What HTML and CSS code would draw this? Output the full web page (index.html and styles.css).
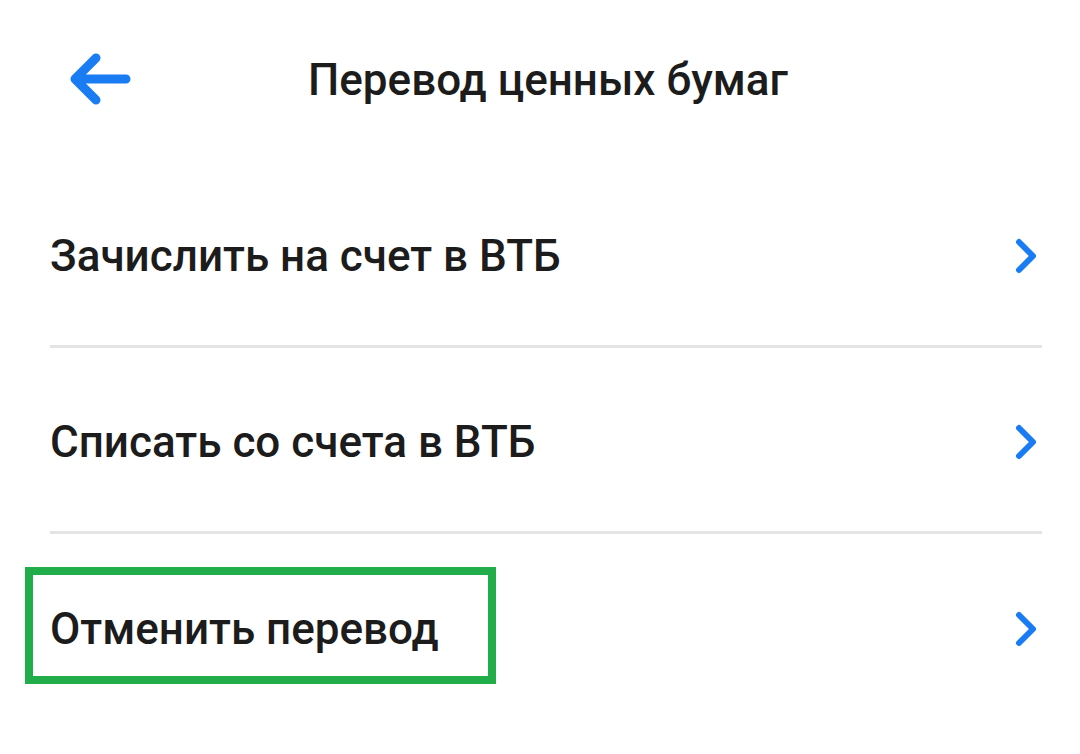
FILE: index.html
```html
<!DOCTYPE html>
<html lang="ru">
<head>
<meta charset="utf-8">
<link rel="stylesheet" href="styles.css">
</head>
<body>
<div class="screen">
  <header class="topbar">
    <button class="back" aria-label="Назад">
      <svg width="64" height="56" viewBox="0 0 64 56"><path d="M58 27H8M28 6L7 27l21 21" fill="none" stroke="#1A7CF2" stroke-width="9" stroke-linecap="round" stroke-linejoin="round"/></svg>
    </button>
    <h1 class="title">Перевод ценных бумаг</h1>
  </header>
  <ul class="list">
    <li class="item"><span class="label">Зачислить на счет в ВТБ</span><svg class="chev" width="24" height="36" viewBox="0 0 24 36"><path d="M5 4l14 14L5 32" fill="none" stroke="#1A7CF2" stroke-width="6" stroke-linecap="round" stroke-linejoin="round"/></svg></li>
    <li class="item"><span class="label">Списать со счета в ВТБ</span><svg class="chev" width="24" height="36" viewBox="0 0 24 36"><path d="M5 4l14 14L5 32" fill="none" stroke="#1A7CF2" stroke-width="6" stroke-linecap="round" stroke-linejoin="round"/></svg></li>
    <li class="item last"><span class="label hl">Отменить перевод</span><svg class="chev" width="24" height="36" viewBox="0 0 24 36"><path d="M5 4l14 14L5 32" fill="none" stroke="#1A7CF2" stroke-width="6" stroke-linecap="round" stroke-linejoin="round"/></svg></li>
  </ul>
</div>
</body>
</html>
```
FILE: styles.css
```css
* { box-sizing: border-box; }
html, body { margin: 0; padding: 0; background: #fff; }
body { font-family: Roboto, "Noto Sans", sans-serif; color: #1c1c1c; width: 1080px; height: 754px; overflow: hidden; }
.screen { position: relative; }
.topbar { height: 162px; position: relative; display: flex; align-items: flex-start; justify-content: center; }
.back { position: absolute; left: 68px; top: 52px; border: 0; background: none; padding: 0; width: 64px; height: 56px; display: block; }
.back svg { display: block; }
.title { margin: 0; margin-top: 52px; margin-left: 16px; font-size: 44px; font-weight: 500; line-height: 56px; letter-spacing: 0; }
.list { list-style: none; margin: 0; padding: 0 38px 0 50px; }
.item { height: 186px; display: flex; align-items: center; justify-content: space-between; border-bottom: 3px solid #e4e4e4; padding-top: 4px; position: relative; }
.item.last { border-bottom: 0; }
.label { font-size: 44px; font-weight: 500; line-height: 48px; }
.chev { display: block; margin-right: 4px; }
.hl { position: relative; }
.hl::after { content: ""; position: absolute; left: -25px; right: -57px; top: -38px; bottom: -31px; border: 8px solid #22AD4B; }
```
